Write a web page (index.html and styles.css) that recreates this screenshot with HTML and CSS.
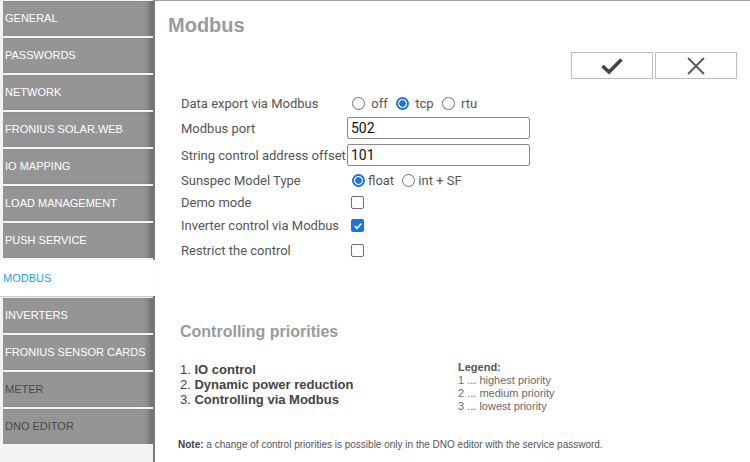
FILE: index.html
```html
<!DOCTYPE html>
<html>
<head>
<meta charset="utf-8">
<link rel="stylesheet" href="styles.css">
</head>
<body>
<div class="app">
  <nav class="sidebar">
    <a class="nav-item">GENERAL</a>
    <a class="nav-item">PASSWORDS</a>
    <a class="nav-item">NETWORK</a>
    <a class="nav-item">FRONIUS SOLAR.WEB</a>
    <a class="nav-item">IO MAPPING</a>
    <a class="nav-item">LOAD MANAGEMENT</a>
    <a class="nav-item">PUSH SERVICE</a>
    <a class="nav-item active">MODBUS</a>
    <a class="nav-item">INVERTERS</a>
    <a class="nav-item">FRONIUS SENSOR CARDS</a>
    <a class="nav-item disabled">METER</a>
    <a class="nav-item disabled">DNO EDITOR</a>
  </nav>
  <main class="content">
    <h1 class="title">Modbus</h1>
    <div class="actions">
      <button class="btn"><svg width="24" height="18" viewBox="0 0 24 18"><path d="M2.5 9 L9 15 L21.5 2.5" fill="none" stroke="#444" stroke-width="3.6" stroke-linejoin="miter" stroke-miterlimit="10"/></svg></button>
      <button class="btn"><svg width="20" height="20" viewBox="0 0 20 20"><path d="M2 2 L18 18 M18 2 L2 18" fill="none" stroke="#555" stroke-width="1.8"/></svg></button>
    </div>
    <div class="form">
      <label class="lbl">Data export via Modbus</label>
      <div class="ctl"><input class="radio" type="radio" name="exp"> off <input class="radio" type="radio" name="exp" checked> tcp <input class="radio" type="radio" name="exp"> rtu</div>
      <label class="lbl">Modbus port</label>
      <div class="ctl"><input class="text" type="text" value="502"></div>
      <label class="lbl">String control address offset</label>
      <div class="ctl"><input class="text" type="text" value="101"></div>
      <label class="lbl">Sunspec Model Type</label>
      <div class="ctl"><input class="radio" type="radio" name="ss" checked>float <input class="radio" type="radio" name="ss">int + SF</div>
      <label class="lbl">Demo mode</label>
      <div class="ctl"><input class="check" type="checkbox"></div>
      <label class="lbl">Inverter control via Modbus</label>
      <div class="ctl"><input class="check" type="checkbox" checked></div>
      <label class="lbl">Restrict the control</label>
      <div class="ctl"><input class="check" type="checkbox"></div>
    </div>
    <h2 class="subtitle">Controlling priorities</h2>
    <div class="prio">
      <ol class="prio-list">
        <li>1. <b>IO control</b></li>
        <li>2. <b>Dynamic power reduction</b></li>
        <li>3. <b>Controlling via Modbus</b></li>
      </ol>
      <div class="legend">
        <div class="legend-title">Legend:</div>
        <div>1 ... highest priority</div>
        <div>2 ... medium priority</div>
        <div>3 ... lowest priority</div>
      </div>
    </div>
    <p class="note"><b>Note:</b> a change of control priorities is possible only in the DNO editor with the service password.</p>
  </main>
</div>
</body>
</html>
```

FILE: styles.css
```css
html, body {
  margin: 0;
  padding: 0;
  height: 100%;
}
body {
  background: #f3f3f3;
  font-family: "Liberation Sans", Arial, sans-serif;
  overflow: hidden;
}
.app {
  display: flex;
  height: 462px;
}
.sidebar {
  width: 153px;
  flex: none;
  padding-top: 1px;
  display: flex;
  flex-direction: column;
}
.nav-item {
  display: block;
  height: 35px;
  line-height: 35px;
  margin: 0 0 2px 3px;
  padding-left: 2px;
  background: #959595;
  color: #ffffff;
  font-size: 11px;
  white-space: nowrap;
  box-shadow: inset -7px 0 7px -4px rgba(0,0,0,0.35);
}
.nav-item.active {
  position: relative;
  z-index: 1;
  margin-left: 0;
  margin-right: -2px;
  padding-left: 3px;
  height: 36px;
  line-height: 36px;
  background: #ffffff;
  color: #1ea1e6;
  box-shadow: 0 1px 1px rgba(0,0,0,0.15);
}
.nav-item.disabled {
  color: #4a4a4a;
}
.content {
  flex: 1;
  background: #ffffff;
  border-left: 2px solid #7a7a7a;
  border-top: 1px solid #a0a0a0;
  padding: 0 13px 0 13px;
  box-sizing: border-box;
}
.title {
  margin: 12px 0 0 0;
  font-size: 20px;
  line-height: 24px;
  font-weight: bold;
  color: #9b9b9b;
}
.actions {
  display: flex;
  justify-content: flex-end;
  gap: 2px;
  margin-top: 15px;
}
.btn {
  width: 82px;
  height: 27px;
  background: #ffffff;
  border: 1px solid #bdbdbd;
  border-radius: 0;
  padding: 0;
  display: flex;
  align-items: center;
  justify-content: center;
}
.form {
  margin: 12px 0 0 13px;
  display: grid;
  grid-template-columns: 166px 200px;
  grid-template-rows: 24px 26px 28px 22px 22px 25px 24px;
  font-family: Roboto, "Noto Sans", sans-serif;
  font-size: 13px;
  color: #555555;
}
.lbl {
  display: flex;
  align-items: center;
  white-space: nowrap;
}
.ctl {
  display: flex;
  align-items: center;
  white-space: pre;
  color: #555555;
}
.radio {
  appearance: none;
  -webkit-appearance: none;
  box-sizing: border-box;
  margin: 0 3px 0 5px;
  width: 13px;
  height: 13px;
  border: 1.5px solid #6f6f6f;
  border-radius: 50%;
  background: #ffffff;
}
.radio:checked {
  border: 2px solid #1a73e8;
  background: radial-gradient(circle, #1a73e8 0 3px, #ffffff 3.5px);
}
.check {
  appearance: none;
  -webkit-appearance: none;
  box-sizing: border-box;
  margin: 0 3px 0 4px;
  width: 13px;
  height: 13px;
  border: 1.5px solid #6f6f6f;
  border-radius: 2px;
  background: #ffffff;
}
.check:checked {
  border-color: #1a73e8;
  background: #1a73e8 url("data:image/svg+xml;utf8,<svg xmlns='http://www.w3.org/2000/svg' width='10' height='10' viewBox='0 0 10 10'><path d='M1.8 5.2 L4 7.3 L8.3 2.6' fill='none' stroke='white' stroke-width='1.6'/></svg>") center / 10px 10px no-repeat;
}
.text {
  width: 183px;
  height: 22px;
  box-sizing: border-box;
  border: 1px solid #8a8a8a;
  border-radius: 2px;
  padding: 0 3px;
  font-family: Roboto, "Noto Sans", sans-serif;
  font-size: 14px;
  color: #111111;
  margin: 0;
}
.subtitle {
  margin: 60px 0 0 12px;
  font-size: 16px;
  line-height: 20px;
  font-weight: bold;
  color: #9b9b9b;
}
.prio {
  display: flex;
  margin: 20px 0 0 12px;
}
.prio-list {
  list-style: none;
  margin: 0;
  padding: 0;
  width: 278px;
  font-size: 13px;
  line-height: 15px;
  color: #444444;
}
.legend {
  margin-top: -1px;
  font-size: 11px;
  line-height: 13px;
  color: #6a6a6a;
}
.legend-title {
  font-weight: bold;
  color: #555555;
}
.note {
  margin: 26px 0 0 10px;
  font-size: 10px;
  line-height: 12px;
  color: #555555;
}
.note b {
  color: #444444;
}
```
